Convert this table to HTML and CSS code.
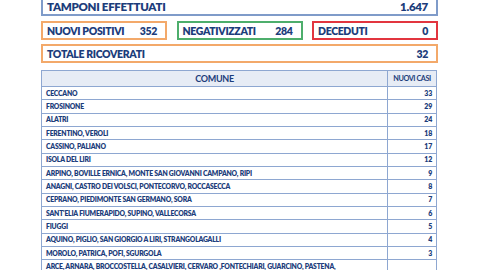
FILE: index.html
```html
<!DOCTYPE html>
<html lang="it">
<head>
<meta charset="utf-8">
<link rel="stylesheet" href="styles.css">
</head>
<body>
<div class="page">
  <div class="box tamponi"><span>TAMPONI EFFETTUATI</span><span>1.647</span></div>
  <div class="trio">
    <div class="box small orange"><span>NUOVI POSITIVI</span><span>352</span></div>
    <div class="box small green"><span>NEGATIVIZZATI</span><span>284</span></div>
    <div class="box small red"><span>DECEDUTI</span><span>0</span></div>
  </div>
  <div class="box small orange ricoverati"><span>TOTALE RICOVERATI</span><span>32</span></div>
  <table class="tab">
    <thead>
      <tr><th class="h-comune">COMUNE</th><th class="h-casi">NUOVI CASI</th></tr>
    </thead>
    <tbody>
      <tr><td>CECCANO</td><td class="num">33</td></tr>
      <tr><td>FROSINONE</td><td class="num">29</td></tr>
      <tr><td>ALATRI</td><td class="num">24</td></tr>
      <tr><td>FERENTINO, VEROLI</td><td class="num">18</td></tr>
      <tr><td>CASSINO, PALIANO</td><td class="num">17</td></tr>
      <tr><td>ISOLA DEL LIRI</td><td class="num">12</td></tr>
      <tr><td>ARPINO, BOVILLE ERNICA, MONTE SAN GIOVANNI CAMPANO, RIPI</td><td class="num">9</td></tr>
      <tr><td>ANAGNI, CASTRO DEI VOLSCI, PONTECORVO, ROCCASECCA</td><td class="num">8</td></tr>
      <tr><td>CEPRANO, PIEDIMONTE SAN GERMANO, SORA</td><td class="num">7</td></tr>
      <tr><td>SANT'ELIA FIUMERAPIDO, SUPINO, VALLECORSA</td><td class="num">6</td></tr>
      <tr><td>FIUGGI</td><td class="num">5</td></tr>
      <tr><td>AQUINO, PIGLIO, SAN GIORGIO A LIRI, STRANGOLAGALLI</td><td class="num">4</td></tr>
      <tr><td>MOROLO, PATRICA, POFI, SGURGOLA</td><td class="num">3</td></tr>
      <tr><td class="multi">ARCE, ARNARA, BROCCOSTELLA, CASALVIERI, CERVARO ,FONTECHIARI, GUARCINO, PASTENA,<br>PICINISCO, SAN DONATO VAL DI COMINO, TREVI NEL LAZIO, VICALVI</td><td class="num low">2</td></tr>
    </tbody>
  </table>
</div>
</body>
</html>
```
FILE: styles.css
```css
html, body {
  margin: 0;
  padding: 0;
  background: #ffffff;
  overflow: hidden;
}
body {
  font-family: Lato, "Liberation Sans", sans-serif;
  font-weight: 800;
  color: #1c3d7b;
}
.page {
  margin-left: 41px;
  width: 397px;
  display: flex;
  flex-direction: column;
}
.box {
  display: flex;
  justify-content: space-between;
  align-items: center;
  box-sizing: border-box;
  border: 2px solid;
  padding: 0 8px 0 4px;
}
.tamponi {
  margin-top: -3px;
  height: 19px;
  border-color: #7f9bc9;
  font-size: 11.5px;
  letter-spacing: -0.3px;
}
.trio {
  display: flex;
  gap: 9.5px;
  margin-top: 5px;
}
.trio .box {
  flex: 1;
}
.small {
  height: 19px;
  font-size: 10.5px;
  letter-spacing: -0.35px;
}
.orange { border-color: #f3a96a; }
.green { border-color: #4dae6c; }
.red { border-color: #e2353f; }
.ricoverati {
  margin-top: 4px;
}
.tab {
  margin-top: 7px;
  width: 396px;
  border-collapse: collapse;
  table-layout: fixed;
}
.tab th, .tab td {
  border: 1px solid #8ea7d1;
  padding: 0 4px;
}
.tab th {
  background: #e7ecf5;
  height: 15px;
  text-align: center;
}
.h-comune {
  font-size: 9px;
  letter-spacing: -0.3px;
}
.h-casi {
  width: 40px;
  font-size: 7.3px;
  letter-spacing: -0.45px;
}
.tab td {
  height: 12.33px;
  font-size: 6.8px;
  line-height: 9px;
  letter-spacing: -0.2px;
  white-space: nowrap;
}
.tab td.num {
  text-align: right;
  font-size: 7px;
}
.tab td.low {
  vertical-align: bottom;
  padding-bottom: 2px;
}
.tab td.multi {
  white-space: normal;
  line-height: 12px;
  padding-top: 0;
}
```
